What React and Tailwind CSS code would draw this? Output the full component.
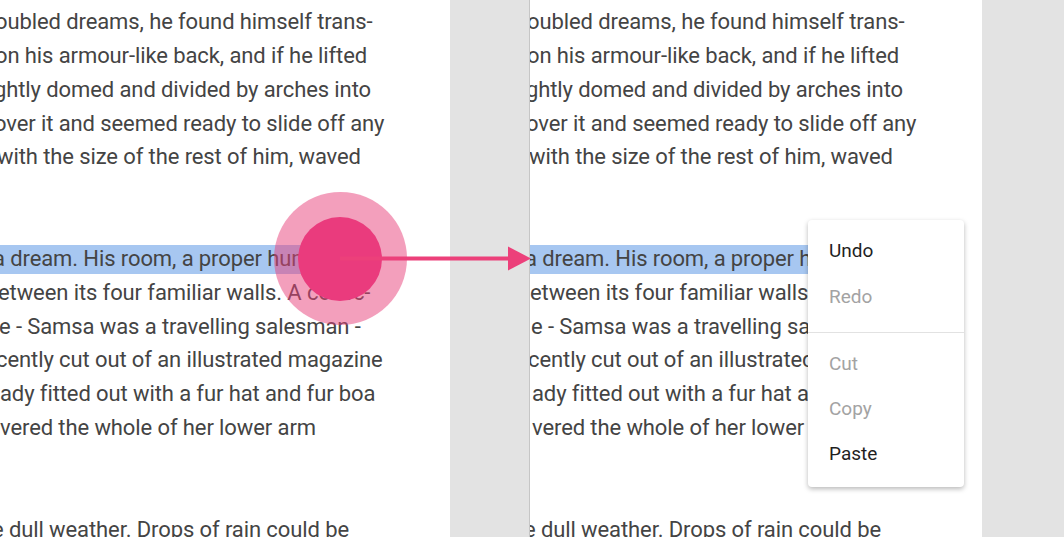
import React from "react";

// visible slice of each line; shift = how far the line starts past the page's left edge
const lines = [
  { text: "oubled dreams, he found himself trans-", shift: "-ml-[3px]" },
  { text: "on his armour-like back, and if he lifted", shift: "-ml-[3px]" },
  { text: "ghtly domed and divided by arches into", shift: "-ml-[4px]" },
  { text: "over it and seemed ready to slide off any", shift: "-ml-[4px]" },
  { text: "with the size of the rest of him, waved", shift: "-ml-[1px]" },
  { text: "" },
  { text: "" },
  { text: "a dream. His room, a proper human", shift: "-ml-[5px]", selected: true },
  { text: "etween its four familiar walls. A collec-", shift: "ml-0" },
  { text: "e - Samsa was a travelling salesman -", shift: "ml-[1px]" },
  { text: "cently cut out of an illustrated magazine", shift: "-ml-[2px]" },
  { text: "ady fitted out with a fur hat and fur boa", shift: "ml-[2px]" },
  { text: "vered the whole of her lower arm", shift: "ml-[2px]" },
  { text: "" },
  { text: "" },
  { text: "e dull weather. Drops of rain could be", shift: "-ml-[6px]" },
];

function Page({ className }) {
  return (
    <div className={`h-full w-[453px] shrink-0 overflow-hidden border-l border-[#c6c6c6] bg-white ${className ?? ""}`}>
      <div className="pt-[5px] font-['Roboto',sans-serif] text-[22px] leading-[33.85px] tracking-[-0.1px] text-[#444]">
        {lines.map((line, i) => (
          <div key={i} className={`h-[33.85px] whitespace-nowrap ${line.shift ?? ""}`}>
            {line.selected ? (
              <span className="bg-[#a7c7f1] pt-[1px] pb-[3px] pr-[2px]">{line.text}</span>
            ) : (
              line.text || "\u00a0"
            )}
          </div>
        ))}
      </div>
    </div>
  );
}

function ContextMenu() {
  const items = [
    { label: "Undo", on: true, tall: true },
    { label: "Redo", on: false, tall: true },
    null,
    { label: "Cut", on: false },
    { label: "Copy", on: false },
    { label: "Paste", on: true },
  ];
  return (
    <div className="absolute left-[808px] top-[220px] w-[156px] rounded-[4px] bg-white pt-[8px] pb-[10px] font-['Roboto',sans-serif] text-[19px] shadow-[0_2px_5px_rgba(0,0,0,0.28)]">
      {items.map((item, i) =>
        item ? (
          <div
            key={i}
            className={`flex items-center px-[21px] ${item.tall ? "h-[46px]" : "h-[45px]"} ${item.on ? "text-[#1f1f1f]" : "text-[#a3a3a3]"}`}
          >
            {item.label}
          </div>
        ) : (
          <div key={i} className="mt-[12px] mb-[9px] h-px bg-[#e2e2e2]" />
        )
      )}
    </div>
  );
}

function DragGesture() {
  return (
    <>
      <div className="absolute left-[273.5px] top-[191.5px] h-[133px] w-[133px] rounded-full bg-[rgba(232,64,122,0.5)]" />
      <div className="absolute left-[298px] top-[216.5px] h-[84px] w-[84px] rounded-full bg-[#ea3b7d]" />
      <svg className="absolute left-0 top-0" width="1064" height="537">
        <line x1="340" y1="258.5" x2="510" y2="258.5" stroke="#ec407a" strokeWidth="4" />
        <polygon points="508,246.5 531,258.5 508,270.5" fill="#ec407a" />
      </svg>
    </>
  );
}

export default function App() {
  return (
    <div className="relative flex h-[537px] w-[1064px] overflow-hidden bg-[#e3e3e3]">
      <Page className="-ml-[3px]" />
      <div className="w-[79px] shrink-0" />
      <Page />
      <DragGesture />
      <ContextMenu />
    </div>
  );
}
